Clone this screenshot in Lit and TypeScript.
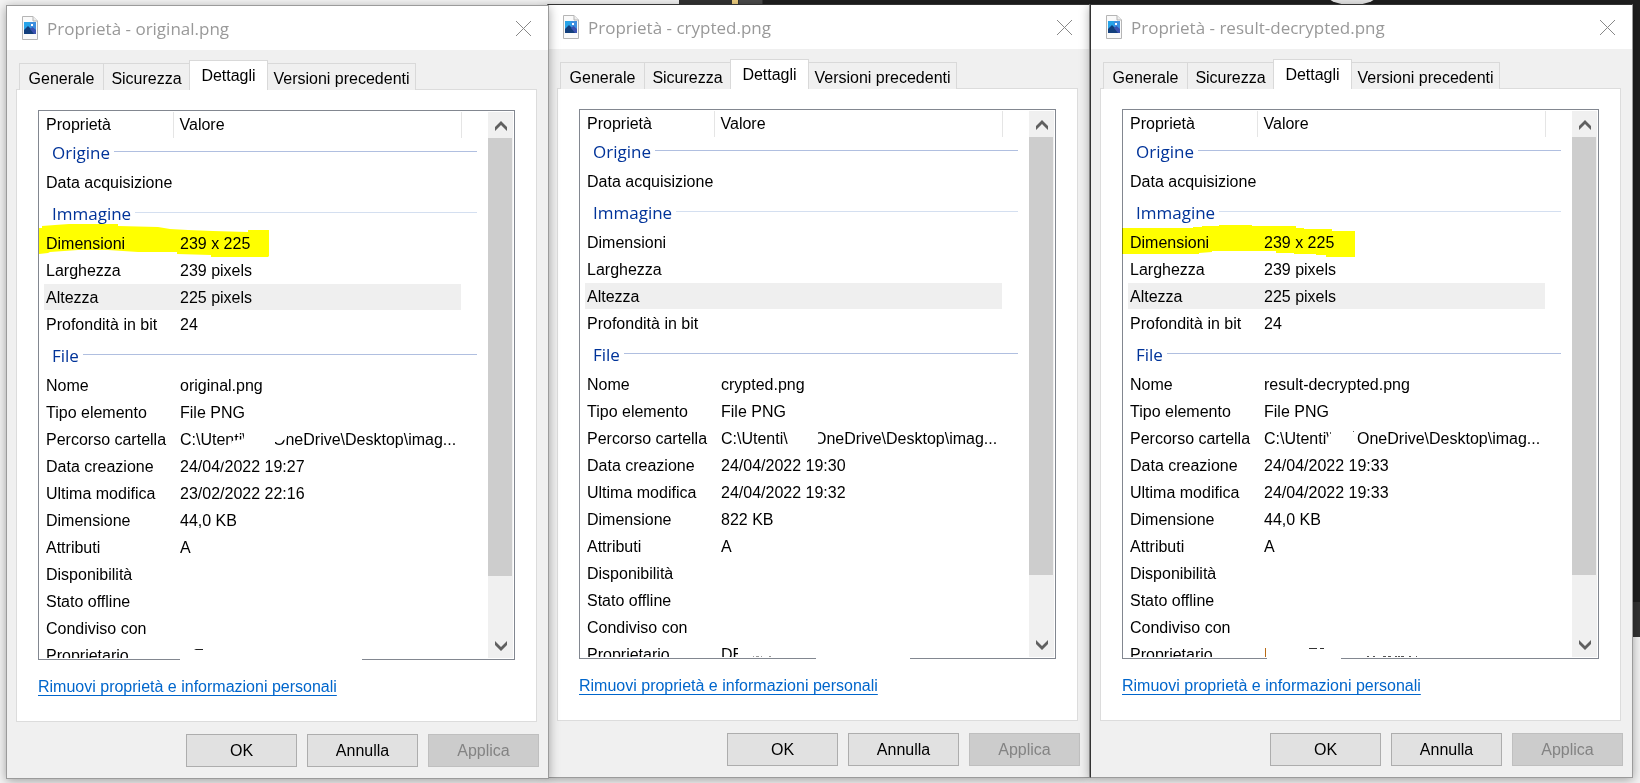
import { LitElement, html, svg, css, nothing } from "lit";
import { customElement, property } from "lit/decorators.js";

interface Group {
  title: string;
  tone: string;
  rows: [string, unknown][];
}

interface FileInfo {
  id: string;
  name: string;
  dims?: string;
  width?: string;
  height?: string;
  depth?: string;
  created: string;
  modified: string;
  size: string;
  owner: string;
}

const FILES: FileInfo[] = [
  { id: "a", name: "original.png", dims: "239 x 225", width: "239 pixels", height: "225 pixels", depth: "24", created: "24/04/2022 19:27", modified: "23/02/2022 22:16", size: "44,0 KB", owner: "" },
  { id: "b", name: "crypted.png", created: "24/04/2022 19:30", modified: "24/04/2022 19:32", size: "822 KB", owner: "DE" },
  { id: "c", name: "result-decrypted.png", dims: "239 x 225", width: "239 pixels", height: "225 pixels", depth: "24", created: "24/04/2022 19:33", modified: "24/04/2022 19:33", size: "44,0 KB", owner: "" },
];

/* Brush strokes, drawn in list coordinates (477 x 550). */
const MARKER: Record<string, unknown> = {
  a: svg`<path d="M1 118L4 118 4 116 17 115 31 114 80 114 80 116 120 117 132 119 150 120 175 121 210 122 210 120 231 120 231 146 230 147 173 147 173 145 139 144 139 142 100 142 70 140 40 140 12 142 10 143 1 144Z"/>`,
  c: svg`<path d="M0 119L71 119 71 118 80 118 80 117 97 117 97 116 130 116 130 117 174 117 174 119 182 119 182 120 210 120 210 122 233 122 233 148 204 148 204 146 194 146 194 145 172 145 172 144 154 144 154 142 90 142 90 143 77 144 77 145 0 145Z"/>`,
};

const ERASER: Record<string, unknown> = {
  a: svg`
    <path fill="#fff" d="M192 337L194 331 206 329 206 318H237V327L249 326V318H237V341H192Z"/>
    <path fill="#fff" d="M236 317H249V328L243 332H236Z"/>
    <path fill="#fff" d="M181 348H190L184 353H181Z"/>
    <path fill="#fff" d="M142 545H324V552H142Z"/>
    <path fill="#222" d="M158 539H165V540H156Z"/>`,
  b: svg`
    <path fill="#fff" d="M234 318H239V336H234Z"/>
    <path fill="#fff" d="M159 532H170V549H159Z"/>
    <path fill="#fff" d="M237 545H331V552H237Z"/>
    <path fill="#999" d="M174 547h1v1h-1zM177 547h3v1h-3zM182 547h1v1h-1zM190 547h2v1h-2z"/>`,
  c: svg`
    <path fill="#fff" d="M204 331L208 325 212 325V342H204Z"/>
    <path fill="#555" d="M208 323h1v2h-1zM231 322h1v1h-1z"/>
    <path fill="#b86a14" d="M143 539h1v9h-1z"/>
    <path fill="#fff" d="M145 545H219V552H145Z"/>
    <path fill="#333" d="M187 539h8v1h-8zM198 539h4v1h-4z"/>
    <path fill="#555" d="M245 547h2v1h-2zM251 547h2v1h-2zM261 547h3v1h-3zM266 547h3v1h-3zM273 547h2v1h-2zM276 547h2v1h-2zM279 547h3v1h-3zM287 547h2v1h-2zM294 547h1v1h-1z"/>`,
};

@customElement("properties-window")
class PropertiesWindow extends LitElement {
  @property({ attribute: false }) file!: FileInfo;

  static styles = css`
    :host {
      display: block;
      box-sizing: border-box;
      background: #f0f0f0;
      border: 1px solid #9b9b9b;
      font: 16px/27px "Liberation Sans", Arial, sans-serif;
      color: #000;
    }
    * { box-sizing: border-box; }
    button { font: inherit; color: inherit; margin: 0; }
    .title {
      display: flex;
      align-items: center;
      height: 44px;
      padding: 0 16px 0 15px;
      background: #fff;
      color: #999;
      font-family: "Open Sans", "Noto Sans", sans-serif;
      font-size: 17px;
    }
    .title h1 { flex: 1; margin: 0 0 0 9px; font: inherit; }
    .close { display: flex; padding: 0; border: 0; background: none; }
    .tabs {
      display: flex;
      align-items: flex-end;
      padding: 10px 12px 0;
      height: 40px;
    }
    .tab {
      height: 27px;
      padding: 3px 0 0;
      line-height: 24px;
      text-align: center;
      white-space: nowrap;
      border: 1px solid #d9d9d9;
      border-bottom: 0;
      border-left: 0;
      background: #f0f0f0;
      width: 86px;
    }
    .tab:first-child { border-left: 1px solid #d9d9d9; width: 85px; }
    .tab:last-child { width: 148px; }
    .tab.active {
      position: relative;
      height: 30px;
      width: 79px;
      margin-left: -1px;
      padding: 0;
      border-left: 1px solid #d9d9d9;
      background: #fff;
    }
    .panel {
      margin: -1px 11px 0 9px;
      padding: 20px 21px 19px;
      height: 633px;
      background: #fff;
      border: 1px solid #dcdcdc;
    }
    .list {
      display: flex;
      justify-content: space-between;
      height: 550px;
      padding: 1px 1px 1px 5px;
      border: 1px solid #828790;
      overflow: hidden;
    }
    .content { flex: 1; min-width: 0; margin-right: 11px; overflow: hidden; height: 546px; }
    table { border-collapse: collapse; table-layout: fixed; width: 100%; }
    td, th { padding: 0; font-weight: 400; text-align: left; white-space: nowrap; }
    thead th { height: 26px; line-height: 26px; border-right: 1px solid #e5e5e5; padding-left: 2px; }
    thead th + th { padding-left: 6px; }
    thead th:last-child { border: 0; }
    .c1 { width: 129px; }
    .c3 { width: 16px; }
    tbody td, tbody th { height: 27px; line-height: 26px; padding: 1px 0 0 2px; }
    tbody td { padding-left: 7px; }
    .selected { background: linear-gradient(#efefef, #efefef) 0 0 / calc(100% - 16px) 26px no-repeat; }
    tbody .group { padding: 0; height: 34px; }
    tbody.first .group { height: 31px; }
    .group div {
      display: flex;
      align-items: center;
      gap: 4px;
      height: 31px;
      padding: 0 0 2px 8px;
      margin-top: 3px;
      color: #003399;
      font: 17px/29px "Open Sans", "Noto Sans", sans-serif;
    }
    .first .group div { margin-top: 0; }
    .group div::after { content: ""; flex: 1; height: 1px; margin-bottom: 2px; background: #b0bfe0; }
    .group .light::after { background: #d4dff0; }
    .user { display: inline-block; width: 93px; }
    .scroll { display: flex; flex-direction: column; width: 25px; background: #f0f0f0; }
    .arrow { display: flex; align-items: center; justify-content: center; height: 26px; padding: 2px 0 0; border: 0; background: #f0f0f0; }
    .thumb { height: 438px; margin-right: 1px; background: #cdcdcd; }
    .scroll .arrow:last-child { margin-top: auto; }
    .listwrap { position: relative; }
    .overlay { position: absolute; left: 0; top: 0; pointer-events: none; }
    .marker { mix-blend-mode: multiply; fill: #ff0; }
    a {
      display: inline-block;
      margin-top: 17px;
      line-height: 20px;
      color: #0066cc;
      text-decoration: underline;
      text-underline-offset: 3px;
      text-decoration-thickness: 1px;
      text-decoration-skip-ink: none;
    }
    .actions { display: flex; justify-content: flex-end; gap: 10px; padding: 12px 9px 11px; }
    .actions button { width: 111px; height: 33px; padding: 0; border: 1px solid #adadad; background: #e1e1e1; line-height: 31px; }
    .actions button:disabled { background: #ccc; border-color: #bfbfbf; color: #838383; }
  `;

  private groups(): Group[] {
    const f = this.file;
    const path = html`<span class="user">C:\\Utenti\\</span>OneDrive\\Desktop\\imag...`;
    return [
      { title: "Origine", tone: "", rows: [["Data acquisizione", ""]] },
      { title: "Immagine", tone: "light", rows: [["Dimensioni", f.dims], ["Larghezza", f.width], ["Altezza", f.height], ["Profondità in bit", f.depth]] },
      {
        title: "File", tone: "", rows: [
          ["Nome", f.name], ["Tipo elemento", "File PNG"], ["Percorso cartella", path],
          ["Data creazione", f.created], ["Ultima modifica", f.modified], ["Dimensione", f.size],
          ["Attributi", "A"], ["Disponibilità", ""], ["Stato offline", ""], ["Condiviso con", ""], ["Proprietario", f.owner],
        ],
      },
    ];
  }

  render() {
    const f = this.file;
    return html`
      <header class="title">
        <svg width="16" height="24" viewBox="0 0 16 24">
          <path d="M.5 .5H11L15.500 5V23.500H.5Z" fill="#fafafa" stroke="#b5b5b5"/>
          <path d="M11 .5V5H15.500" fill="#eee" stroke="#b5b5b5"/>
          <rect x="2" y="6" width="12" height="12" fill="#27a3e8"/>
          <path d="M8 6H14V18H8Z" fill="#3d8fe0"/>
          <path d="M2 14L6 10 14 18H2Z" fill="#123f7c"/>
          <path d="M8 13L10.500 11 14 14V18H12Z" fill="#3a51b0"/>
          <rect x="9" y="8" width="2" height="2" fill="#fff"/>
        </svg>
        <h1>Proprietà - ${f.name}</h1>
        <button class="close" aria-label="Chiudi">
          <svg width="17" height="17" viewBox="0 0 17 17" stroke="#888" fill="none"><path d="M1 1L16 16M16 1L1 16"/></svg>
        </button>
      </header>
      <nav class="tabs" role="tablist">
        <button class="tab" role="tab">Generale</button>
        <button class="tab" role="tab">Sicurezza</button>
        <button class="tab active" role="tab" aria-selected="true">Dettagli</button>
        <button class="tab" role="tab">Versioni precedenti</button>
      </nav>
      <section class="panel">
        <div class="listwrap">
          <div class="list">
            <div class="content">
              <table>
                <thead><tr><th class="c1">Proprietà</th><th>Valore</th><th class="c3"></th></tr></thead>
                ${this.groups().map((g, i) => html`
                  <tbody class=${i === 0 ? "first" : ""}>
                    <tr><th class="group" colspan="3"><div class=${g.tone}>${g.title}</div></th></tr>
                    ${g.rows.map(([k, v]) => html`
                      <tr class=${k === "Altezza" ? "selected" : ""}><th scope="row">${k}</th><td>${v ?? nothing}</td><td></td></tr>`)}
                  </tbody>`)}
              </table>
            </div>
            <div class="scroll">
              <button class="arrow" aria-label="Su"><svg width="12" height="10" viewBox="0 0 12 10" fill="#606060"><path d="M6 0L12 6V10L6 4 0 10V6Z"/></svg></button>
              <div class="thumb"></div>
              <button class="arrow" aria-label="Giù"><svg width="12" height="10" viewBox="0 0 12 10" fill="#606060"><path d="M6 10L12 4V0L6 6 0 0V4Z"/></svg></button>
            </div>
          </div>
          <svg class="overlay marker" width="477" height="552">${MARKER[f.id] ?? nothing}</svg>
          <svg class="overlay" width="477" height="552">${ERASER[f.id]}</svg>
        </div>
        <a href="#">Rimuovi proprietà e informazioni personali</a>
      </section>
      <footer class="actions">
        <button>OK</button><button>Annulla</button><button disabled>Applica</button>
      </footer>
    `;
  }
}

@customElement("app-root")
class AppRoot extends LitElement {
  static styles = css`
    :host { display: block; }
    .desktop {
      position: relative;
      box-sizing: border-box;
      display: flex;
      align-items: flex-start;
      min-height: 100vh;
      padding: 4px 7px 0 6px;
      background: #f4f4f4;
      overflow: hidden;
    }
    .backdrop { position: absolute; top: 0; right: 0; left: 679px; height: 637px; background: #1f1f1f; }
    .backdrop svg { display: block; }
    .lower { position: absolute; right: 0; bottom: 0; width: 20px; height: 35px; background: #333; }
    properties-window { position: relative; flex: 1; min-width: 0; box-shadow: 0 2px 10px rgba(0, 0, 0, 0.35); }
    .front { z-index: 1; margin: 1px -2px 0 0; }
    .dark { border-top-color: #333; }
    .last { z-index: 1; border-left-color: #333; }
  `;

  render() {
    const cls = ["front", "dark", "dark last"];
    return html`
      <main class="desktop">
        <div class="backdrop">
          <svg width="700" height="5">
            <rect width="84" height="5" fill="#333"/><rect x="53" width="6" height="5" fill="#f0d080"/><rect x="60" width="23" height="5" fill="#4a4a4a"/>
            <ellipse cx="673" cy="-4" rx="24" ry="9" fill="#e8e8e8"/>
          </svg>
          <div class="lower"></div>
        </div>
        ${FILES.map((f, i) => html`<properties-window class=${cls[i]} .file=${f}></properties-window>`)}
      </main>`;
  }
}
